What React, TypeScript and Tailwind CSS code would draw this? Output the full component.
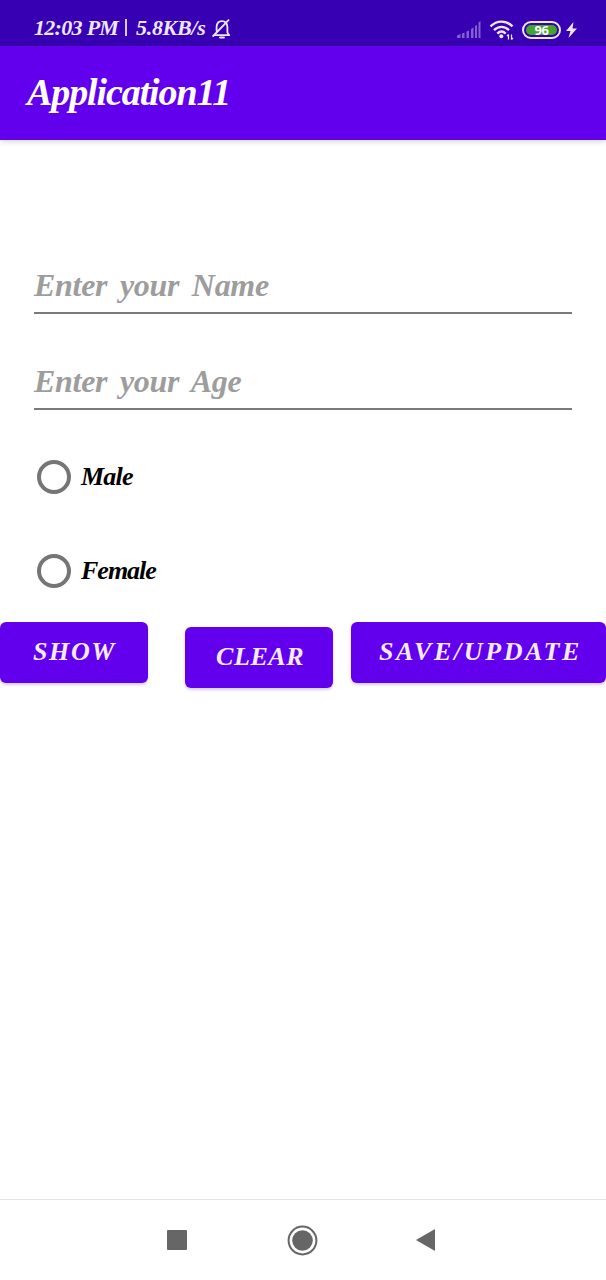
import React from "react";

function StatusBar() {
  return (
    <div className="flex h-[46px] items-start bg-[#3700b3] pl-[34px] text-[#eee6fc]">
      <div className="mt-[14px] flex h-7 items-center whitespace-pre text-[22px] leading-7 font-bold italic">
        <span className="w-[91px] tracking-[-0.7px]">12:03 PM</span>
        <span className="mb-0.5 h-[17px] w-[2px] shrink-0 bg-[#d9caf5]" />
        <span className="ml-[9px] w-[76px] tracking-[-0.3px]">5.8KB/s</span>
      </div>
      <svg className="mt-[19px] h-[21px] w-[20px]" viewBox="0 0 20 21" fill="none" stroke="currentColor" strokeWidth="1.8" strokeLinecap="round" strokeLinejoin="round">
        <path d="M3 16.2h14.2l-1.8-2.7V7.8C15 4.2 13 2.2 10 2.2S4.8 4.4 4.6 7.8V12" />
        <path d="M1.2 17L16.5 1.2M8 18.5h4" />
      </svg>
      <svg className="ml-[225px] mt-[20px] h-[19px] w-[25px]" viewBox="0 0 25 19" fill="#8360d0">
        <path d="M0 15.500L3.500 14v4H0zM5 13.500L7.500 12.500V18H5zM9.500 11.500L12 10.500V18H9.500zM14 9L16.500 7.500V18H14zM18 6L20 5V18H18zM21.500 2.500L23.500 1V18H21.500z" />
      </svg>
      <svg className="ml-[7px] mt-[19px] h-[22px] w-[26px]" viewBox="0 0 26 22" fill="none" stroke="currentColor" strokeWidth="2.4">
        <path d="M1.500 7.400C8 1 17 1 23.500 7.400M5 11.200C9.500 6.700 15.500 6.700 20 11.200M8.300 14.600C11 12 14 12 16.700 14.600" />
        <circle cx="12.300" cy="17.200" r="2" fill="currentColor" stroke="none" />
        <path d="M19.500 15.500v5M22.500 15.500v5M18 17l1.500-1.500M22.500 20.500l1.500-1.500" strokeWidth="1.200" />
      </svg>
      <div className="ml-[7px] mt-[21px] flex h-[18px] w-[39px] shrink-0 rounded-full border-2 border-[#eee6fc] p-[2px]">
        <div className="flex flex-1 items-center justify-center rounded-full bg-[#43a52c] font-['Open_Sans',sans-serif] text-[13px] leading-none font-bold tracking-[-0.5px] text-white">96</div>
      </div>
      <svg className="ml-[4px] mt-[22px] h-[16px] w-[13px] shrink-0" viewBox="0 0 13 16" fill="currentColor">
        <path d="M8.500 0L1 9h4.500L3.500 16L12 6.500H7.500Z" />
      </svg>
    </div>
  );
}

function Field({ label }: { label: string }) {
  return (
    <div className="mx-[34px] h-[96px]">
      <div className="h-[54px] border-b-2 border-[#7a7a7a] pt-[3px] text-[32px] leading-[44px] font-bold italic tracking-[-0.3px] whitespace-pre text-[#9d9d9d] [word-spacing:5px]">{label}</div>
    </div>
  );
}

function Radio({ label, track }: { label: string; track: string }) {
  return (
    <div className="flex h-[94px] items-center pl-[37px]">
      <span className="size-[34px] rounded-full border-[4px] border-[#757575]" />
      <span className={`ml-[10px] text-[26px] leading-8 font-bold italic text-black ${track}`}>{label}</span>
    </div>
  );
}

function Button({ children, className }: { children: React.ReactNode; className: string }) {
  return (
    <button className={`flex h-[61px] shrink-0 items-center rounded-[6px] bg-[#6200ee] pb-[2px] text-[26px] leading-8 font-bold italic text-[#f5eaff] shadow-[0_2px_3px_rgba(60,0,130,0.2)] ${className}`}>
      {children}
    </button>
  );
}

export default function App() {
  return (
    <div className="flex h-[1280px] w-[606px] flex-col overflow-hidden bg-white font-['Liberation_Serif',serif]">
      <StatusBar />
      <header className="h-[94px] shrink-0 bg-[#6200ee] pt-[23px] pl-[27px] text-[38px] leading-[46px] font-bold italic tracking-[-1.1px] text-white shadow-[0_1px_6px_rgba(0,0,0,0.2)]">
        Application11
      </header>
      <main className="flex-1 pt-[120px]">
        <Field label="Enter your Name" />
        <Field label="Enter your Age" />
        <div className="-mt-[22px]">
          <Radio label="Male" track="tracking-[-0.8px]" />
          <Radio label="Female" track="tracking-[-1px]" />
        </div>
        <div className="mt-[4px] flex items-start">
          <Button className="w-[148px] pl-[33px] tracking-[1.600px]">SHOW</Button>
          <Button className="mt-[5px] ml-[37px] w-[148px] pl-[31px] tracking-[0.6px]">CLEAR</Button>
          <Button className="ml-[18px] w-[255px] pl-[28px] tracking-[2.600px]">SAVE/UPDATE</Button>
        </div>
      </main>
      <nav className="flex h-[81px] items-center border-t border-[#e4e4e4] pl-[167px] text-[#666666]">
        <span className="size-[20px] rounded-[1px] bg-[#666666]" />
        <svg className="ml-[100px] size-[31px]" viewBox="0 0 31 31">
          <circle cx="15.500" cy="15.500" r="13.900" fill="none" stroke="currentColor" strokeWidth="2" />
          <circle cx="15.500" cy="15.500" r="10.300" fill="currentColor" />
        </svg>
        <svg className="ml-[98px] h-[22px] w-[19px]" viewBox="0 0 19 22" fill="currentColor">
          <path d="M0 11L19 0v22Z" />
        </svg>
      </nav>
    </div>
  );
}
